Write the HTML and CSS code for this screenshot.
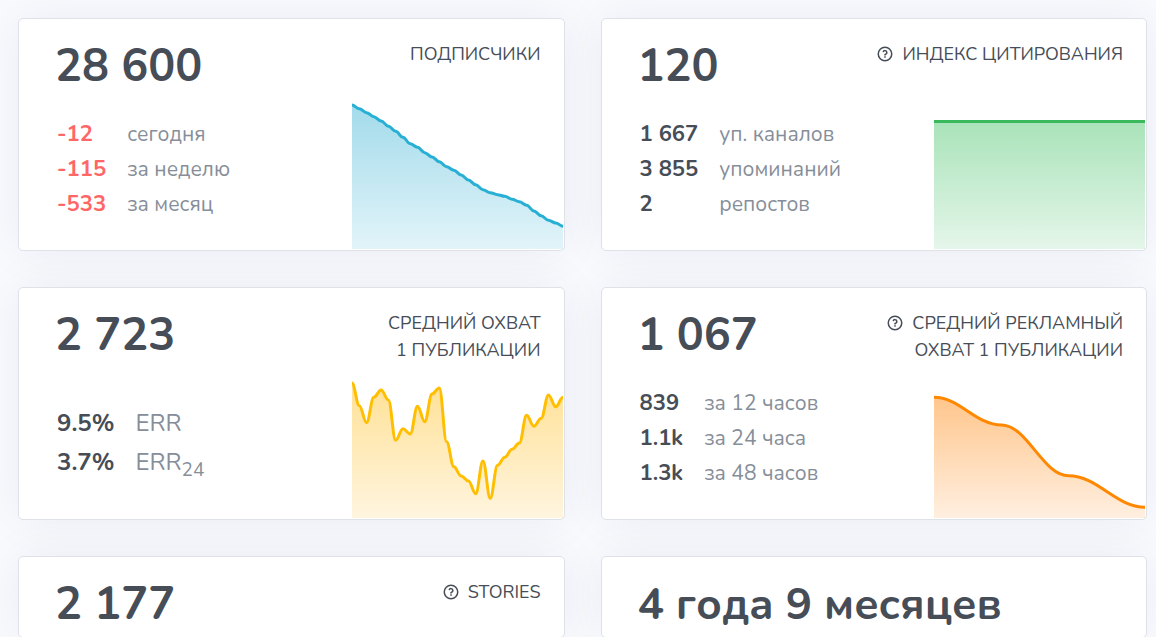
FILE: index.html
```html
<!DOCTYPE html>
<html lang="ru">
<head>
  <meta charset="UTF-8">
  <meta name="viewport" content="width=device-width, initial-scale=1.0">
  <title>Статистика канала</title>
  <link rel="stylesheet" href="styles.css">
</head>
<body>
  <svg class="sprite" aria-hidden="true">
    <symbol id="help" viewBox="0 0 24 24">
      <circle cx="12" cy="12" r="9" fill="none" stroke="currentColor" stroke-width="2"/>
      <path fill="currentColor" d="M11 15h2v2h-2zM13 13.355V14h-2v-1.5a1 1 0 0 1 1-1 1.5 1.5 0 1 0-1.471-1.794l-1.962-.393A3.501 3.501 0 1 1 13 13.355z"/>
    </symbol>
  </svg>

  <main class="stats-grid">
    <section class="card">
      <div class="card-header">
        <h2 class="total">28 600</h2>
        <div class="caption">Подписчики</div>
      </div>
      <div class="card-body">
        <table class="details">
          <tr><td class="value negative">-12</td><td>сегодня</td></tr>
          <tr><td class="value negative">-115</td><td>за неделю</td></tr>
          <tr><td class="value negative">-533</td><td>за месяц</td></tr>
        </table>
        <svg class="chart chart-blue" id="subscribers" viewBox="0 0 211 150" aria-hidden="true"></svg>
      </div>
    </section>

    <section class="card">
      <div class="card-header">
        <h2 class="total">120</h2>
        <div class="caption"><button class="help" type="button" aria-label="Справка"><svg><use href="#help"/></svg></button>Индекс цитирования</div>
      </div>
      <div class="card-body">
        <table class="details">
          <tr><td class="value">1 667</td><td>уп. каналов</td></tr>
          <tr><td class="value">3 855</td><td>упоминаний</td></tr>
          <tr><td class="value">2</td><td>репостов</td></tr>
        </table>
        <svg class="chart chart-green" id="citation" viewBox="0 0 211 150" aria-hidden="true"></svg>
      </div>
    </section>

    <section class="card">
      <div class="card-header">
        <h2 class="total">2 723</h2>
        <div class="caption">Средний охват<br>1 публикации</div>
      </div>
      <div class="card-body">
        <table class="details details-large">
          <tr><td class="value">9.5%</td><td>ERR</td></tr>
          <tr><td class="value">3.7%</td><td>ERR<sub>24</sub></td></tr>
        </table>
        <svg class="chart chart-yellow" id="reach" viewBox="0 0 211 150" aria-hidden="true"></svg>
      </div>
    </section>

    <section class="card">
      <div class="card-header">
        <h2 class="total">1 067</h2>
        <div class="caption"><button class="help" type="button" aria-label="Справка"><svg><use href="#help"/></svg></button>Средний рекламный<br>охват 1 публикации</div>
      </div>
      <div class="card-body">
        <table class="details">
          <tr><td class="value">839</td><td>за 12 часов</td></tr>
          <tr><td class="value">1.1k</td><td>за 24 часа</td></tr>
          <tr><td class="value">1.3k</td><td>за 48 часов</td></tr>
        </table>
        <svg class="chart chart-orange" id="adReach" viewBox="0 0 211 150" aria-hidden="true"></svg>
      </div>
    </section>

    <section class="card">
      <div class="card-header">
        <h2 class="total">2 177</h2>
        <div class="caption"><button class="help" type="button" aria-label="Справка"><svg><use href="#help"/></svg></button>Stories</div>
      </div>
    </section>

    <section class="card">
      <div class="card-header">
        <h2 class="total total-text">4 года 9 месяцев</h2>
      </div>
    </section>
  </main>

  <script src="charts.js"></script>
</body>
</html>
```
FILE: styles.css
```css
* {
  box-sizing: border-box;
}
body {
  margin: 0;
  background: #f9fafe;
  color: #464d57;
  font-family: Nunito, "Noto Sans", "Open Sans", sans-serif;
  font-size: 21px;
  overflow-x: hidden;
}
.sprite {
  display: none;
}
.stats-grid {
  display: grid;
  grid-template-columns: repeat(2, minmax(0, 1fr));
  gap: 36px;
  padding: 18px 9px 0 18px;
}
.card {
  display: flex;
  flex-direction: column;
  background: #fff;
  border: 1px solid #dee2e6;
  border-radius: 5px;
  box-shadow: 0 0 50px rgba(8, 21, 66, 0.06);
}
.card-header {
  display: flex;
  justify-content: space-between;
  height: 80px;
  padding: 18px 23px 0 36px;
}
.total {
  margin: 0;
  font-size: 45px;
  font-weight: 700;
  line-height: 60px;
  white-space: nowrap;
}
.total-text {
  font-size: 44px;
}
.caption {
  padding-top: 4px;
  font-size: 18px;
  font-weight: 400;
  line-height: 27px;
  text-align: right;
  text-transform: uppercase;
  white-space: nowrap;
}
.help {
  width: 18px;
  height: 18px;
  margin-right: 8px;
  padding: 0;
  border: 0;
  background: none;
  color: inherit;
  vertical-align: -3px;
  cursor: pointer;
}
.help svg {
  display: block;
  width: 18px;
  height: 18px;
}
.card-body {
  display: flex;
  justify-content: space-between;
  padding: 0 1px 1px 38px;
}
.details {
  align-self: flex-start;
  margin-top: 18px;
  border-spacing: 0;
  color: #868e99;
  line-height: 35px;
  white-space: nowrap;
}
.details td {
  padding: 0;
}
.details .value {
  padding-right: 21px;
  color: #464d57;
  font-size: 22px;
  font-weight: 700;
}
.details .negative {
  color: #ff6666;
}
.details-large {
  margin-top: 36px;
  line-height: 39px;
}
.details-large td,
.details-large .value {
  font-size: 24px;
}
.details sub {
  font-size: 19px;
  line-height: 0;
}
.chart {
  flex: none;
  width: 211px;
  height: 150px;
}
.chart-line {
  fill: none;
  stroke-width: 3;
}
.chart-blue {
  --line: #27afd4;
  --top: #a3dbeb;
  --bottom: #e2f4f9;
}
.chart-green {
  --line: #3ab85c;
  --top: #a9e3b9;
  --bottom: #e5f6ea;
}
.chart-yellow {
  --line: #ffbf00;
  --top: #ffe196;
  --bottom: #fff5df;
}
.chart-orange {
  --line: #ff8800;
  --top: #ffc68c;
  --bottom: #ffefe0;
}
.chart-line {
  stroke: var(--line);
}
.stop-top {
  stop-color: var(--top);
}
.stop-bottom {
  stop-color: var(--bottom);
}
```
FILE: charts.js
```js
const WIDTH = 211;
const HEIGHT = 150;

const series = {
  subscribers: [6, 9.7, 13.7, 17.7, 22, 27.3, 32.3, 38.3, 44.7, 48.3, 53.7, 58, 62.7, 67.7, 71.3,
    76, 81, 85.7, 90.7, 93.7, 95.7, 97.3, 100.3, 102.7, 106.3, 112, 116.7, 121.3, 124, 127.3],
  citation: [22.5, 22.5],
  reach: [15, 37.7, 54.7, 29.3, 22, 32, 72.3, 60.7, 66, 38.3, 53.7, 26, 20, 73.7, 98.7,
    108, 113, 125.7, 93, 130.3, 97.3, 89.3, 81.3, 75, 47.3, 58.3, 50.3, 27, 38.7, 29.3],
  adReach: [[0, 29.3], [67.5, 57], [134.5, 107.7], [211, 139.3]]
};

// smooth line with horizontal tangents at every point
function buildLine(points) {
  let d = `M${points[0][0]} ${points[0][1]}`;
  for (let i = 1; i < points.length; i++) {
    const [x0, y0] = points[i - 1];
    const [x1, y1] = points[i];
    const k = (x1 - x0) * 0.38;
    d += ` C${x0 + k} ${y0} ${x1 - k} ${y1} ${x1} ${y1}`;
  }
  return d;
}

Object.keys(series).forEach(id => {
  const values = series[id];
  const points = values.map((v, i) => Array.isArray(v) ? v : [i * WIDTH / (values.length - 1), v]);
  const line = buildLine(points);

  document.getElementById(id).innerHTML = `
    <linearGradient id="${id}Fill" x1="0" y1="0" x2="0" y2="1">
      <stop class="stop-top" offset="0"/>
      <stop class="stop-bottom" offset="1"/>
    </linearGradient>
    <path fill="url(#${id}Fill)" d="${line} V${HEIGHT} H0 Z"/>
    <path class="chart-line" d="${line}"/>
  `;
});
```
